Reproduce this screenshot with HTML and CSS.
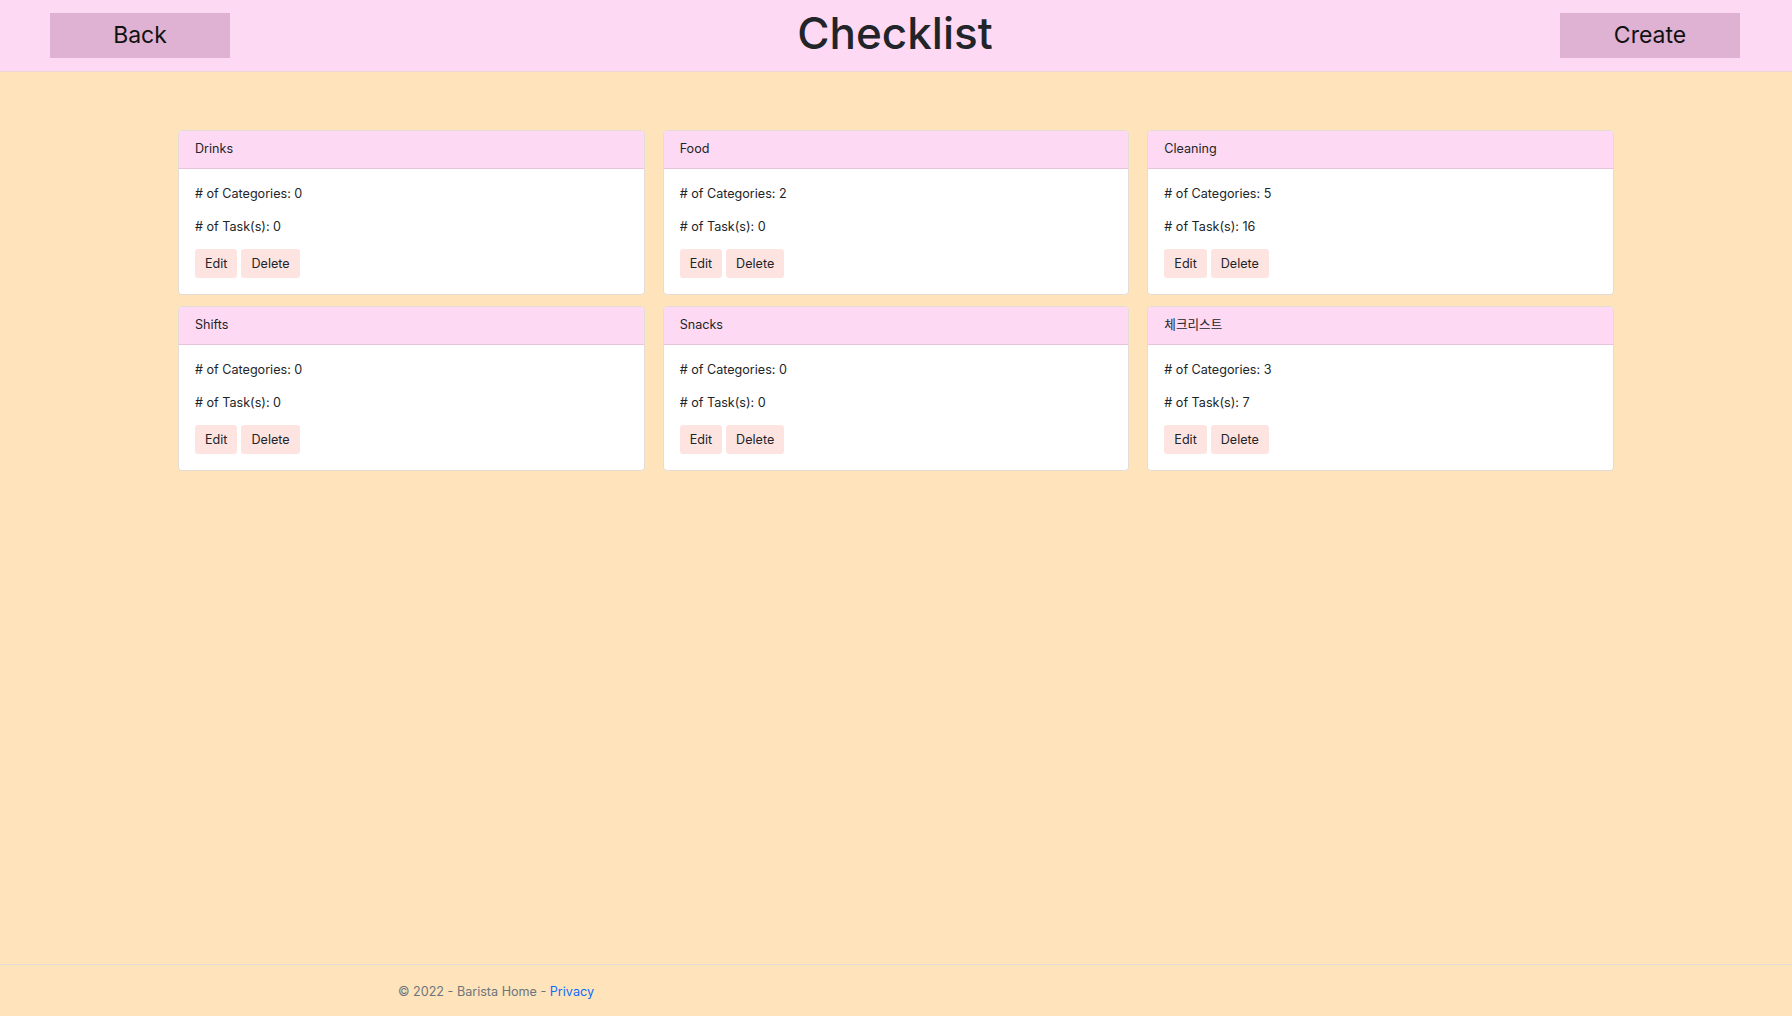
FILE: index.html
```html
<!DOCTYPE html>
<html lang="en">
<head>
<meta charset="utf-8">
<title>Checklist</title>
<link rel="stylesheet" href="styles.css">
</head>
<body>
<header class="topbar">
  <div class="side side-left"><a class="top-btn" href="#">Back</a></div>
  <h1 class="title">Checklist</h1>
  <div class="side side-right"><a class="top-btn" href="#">Create</a></div>
</header>
<main class="main">
  <div class="grid">
    <div class="card">
      <div class="card-header">Drinks</div>
      <div class="card-body">
        <p># of Categories: 0</p>
        <p># of Task(s): 0</p>
        <div class="actions"><button class="btn">Edit</button><button class="btn">Delete</button></div>
      </div>
    </div>
    <div class="card">
      <div class="card-header">Food</div>
      <div class="card-body">
        <p># of Categories: 2</p>
        <p># of Task(s): 0</p>
        <div class="actions"><button class="btn">Edit</button><button class="btn">Delete</button></div>
      </div>
    </div>
    <div class="card">
      <div class="card-header">Cleaning</div>
      <div class="card-body">
        <p># of Categories: 5</p>
        <p># of Task(s): 16</p>
        <div class="actions"><button class="btn">Edit</button><button class="btn">Delete</button></div>
      </div>
    </div>
    <div class="card">
      <div class="card-header">Shifts</div>
      <div class="card-body">
        <p># of Categories: 0</p>
        <p># of Task(s): 0</p>
        <div class="actions"><button class="btn">Edit</button><button class="btn">Delete</button></div>
      </div>
    </div>
    <div class="card">
      <div class="card-header">Snacks</div>
      <div class="card-body">
        <p># of Categories: 0</p>
        <p># of Task(s): 0</p>
        <div class="actions"><button class="btn">Edit</button><button class="btn">Delete</button></div>
      </div>
    </div>
    <div class="card">
      <div class="card-header">체크리스트</div>
      <div class="card-body">
        <p># of Categories: 3</p>
        <p># of Task(s): 7</p>
        <div class="actions"><button class="btn">Edit</button><button class="btn">Delete</button></div>
      </div>
    </div>
  </div>
</main>
<footer class="footer">
  <div class="footer-inner">© 2022 - Barista Home - <a href="#">Privacy</a></div>
</footer>
</body>
</html>
```

FILE: styles.css
```css
* { box-sizing: border-box; }
html, body { height: 100%; }
body {
  margin: 0;
  background: #ffe3bb;
  font-family: Inter, "Noto Sans CJK KR", sans-serif;
  color: #212529;
  display: flex;
  flex-direction: column;
}
.topbar {
  height: 72px;
  background: #fed9f3;
  border-bottom: 1px solid #efd6d6;
  display: grid;
  grid-template-columns: 1fr auto 1fr;
  align-items: start;
  padding: 13px 52px 0 50px;
}
.side { display: flex; }
.side-right { justify-content: flex-end; }
.top-btn {
  display: block;
  width: 180px;
  height: 45px;
  line-height: 45px;
  text-align: center;
  background: #dfb2d3;
  color: #111;
  text-decoration: none;
  font-size: 23px;
}
.title {
  margin: 0;
  margin-top: -6px;
  font-size: 44px;
  font-weight: 500;
  line-height: 1.2;
}
.main {
  flex: 1;
  padding-top: 58px;
}
.grid {
  width: 1436px;
  margin: 0 auto;
  display: grid;
  grid-template-columns: repeat(3, 1fr);
  column-gap: 18px;
  row-gap: 11px;
}
.card {
  background: #fff;
  border: 1px solid #e3dcd6;
  border-radius: 4px;
  overflow: hidden;
}
.card-header {
  height: 38px;
  background: #fed9f3;
  border-bottom: 1px solid #e7c4dc;
  padding: 0 16px;
  font-size: 12.6px;
  line-height: 35px;
}
.card-body {
  padding: 13.5px 16px 16.5px;
  font-size: 12.6px;
}
.card-body p {
  margin: 0 0 12px;
  line-height: 21px;
}
.actions {
  display: flex;
  gap: 4px;
}
.btn {
  font-family: inherit;
  font-size: 12.6px;
  color: #212529;
  background: #fee4e1;
  border: none;
  border-radius: 3px;
  height: 29px;
  padding: 0 10px;
}
.footer {
  border-top: 1px solid #e3dcd6;
  height: 52px;
}
.footer-inner {
  padding-left: 398px;
  line-height: 54px;
  font-size: 12.6px;
  color: #6c757d;
}
.footer-inner a {
  color: #0d6efd;
  text-decoration: none;
}
```
